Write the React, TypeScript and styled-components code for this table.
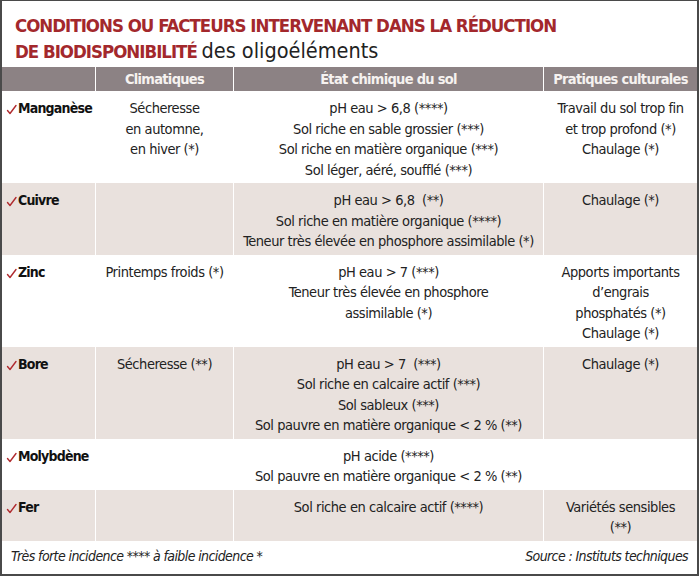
import React from "react";
import styled, { createGlobalStyle } from "styled-components";

const Global = createGlobalStyle`
  html, body { margin: 0; padding: 0; background: #fff; }
  body { font-family: "Liberation Sans Narrow", "DejaVu Sans Condensed", "Open Sans", sans-serif; font-stretch: condensed; }
`;

const Frame = styled.div`
  width: 699px;
  height: 576px;
  box-sizing: border-box;
  border: 2px solid #4a4a4a;
  border-top-width: 1px;
  background: #fff;
  display: flex;
  flex-direction: column;
  color: #222;
`;

const Title = styled.div`
  padding: 13px 0 0 13px;
  height: 66px;
  box-sizing: border-box;
  line-height: 24px;
`;

const Red = styled.span`
  color: #a3282c;
  font-weight: 700;
  font-size: 18.5px;
  letter-spacing: -1px;
  text-transform: uppercase;
`;

const Plain = styled.span`
  color: #222;
  font-weight: 400;
  font-size: 21.5px;
  letter-spacing: 0px;
`;

const Row = styled.div`
  display: grid;
  grid-template-columns: 93px 137px 309px 1fr;
  column-gap: 1px;
  background: #fff;
`;

const HeadCell = styled.div`
  background: #8c8284;
  color: #f6f2f0;
  font-weight: 700;
  font-size: 14.5px;
  letter-spacing: -0.7px;
  height: 24px;
  line-height: 24px;
  text-align: center;
`;

const Cell = styled.div<{ $shade: boolean }>`
  background: ${(p) => (p.$shade ? "#e9e1dd" : "#fff")};
  padding: 7px 2px 3px;
  font-size: 14.5px;
  letter-spacing: -0.45px;
  line-height: 20.5px;
  text-align: center;
  color: #222;
`;

const NameCell = styled(Cell)`
  text-align: left;
  padding-left: 4px;
  font-weight: 700;
  font-size: 14px;
  letter-spacing: -0.8px;
  color: #111;
  display: flex;
  align-items: flex-start;
  gap: 1px;
`;

const Check = styled.svg`
  width: 11px;
  height: 11px;
  margin-top: 6px;
  flex: none;
`;

const Line = styled.div`
  white-space: pre;
`;

const Footer = styled.div`
  flex: 1;
  display: flex;
  justify-content: space-between;
  align-items: center;
  padding: 0 9px 2px 9px;
  font-style: italic;
  font-size: 14px;
  letter-spacing: -0.6px;
  color: #222;
`;

type RowData = {
  name: string;
  clim: string[];
  etat: string[];
  prat: string[];
};

const rows: RowData[] = [
  {
    name: "Manganèse",
    clim: ["Sécheresse", "en automne,", "en hiver (*)"],
    etat: [
      "pH eau > 6,8 (****)",
      "Sol riche en sable grossier (***)",
      "Sol riche en matière organique (***)",
      "Sol léger, aéré, soufflé (***)",
    ],
    prat: ["Travail du sol trop fin", "et trop profond (*)", "Chaulage (*)"],
  },
  {
    name: "Cuivre",
    clim: [],
    etat: [
      "pH eau > 6,8  (**)",
      "Sol riche en matière organique (****)",
      "Teneur très élevée en phosphore assimilable (*)",
    ],
    prat: ["Chaulage (*)"],
  },
  {
    name: "Zinc",
    clim: ["Printemps froids (*)"],
    etat: ["pH eau > 7 (***)", "Teneur très élevée en phosphore", "assimilable (*)"],
    prat: ["Apports importants", "d’engrais", "phosphatés (*)", "Chaulage (*)"],
  },
  {
    name: "Bore",
    clim: ["Sécheresse (**)"],
    etat: [
      "pH eau > 7  (***)",
      "Sol riche en calcaire actif (***)",
      "Sol sableux (***)",
      "Sol pauvre en matière organique < 2 % (**)",
    ],
    prat: ["Chaulage (*)"],
  },
  {
    name: "Molybdène",
    clim: [],
    etat: ["pH acide (****)", "Sol pauvre en matière organique < 2 % (**)"],
    prat: [],
  },
  {
    name: "Fer",
    clim: [],
    etat: ["Sol riche en calcaire actif (****)"],
    prat: ["Variétés sensibles", "(**)"],
  },
];

const Lines = ({ items }: { items: string[] }) => (
  <>
    {items.map((t, i) => (
      <Line key={i}>{t}</Line>
    ))}
  </>
);

export default function App() {
  return (
    <>
      <Global />
      <Frame>
        <Title>
          <Red>Conditions ou facteurs intervenant dans la réduction</Red>
          <br />
          <Red>de biodisponibilité</Red> <Plain>des oligoéléments</Plain>
        </Title>
        <Row>
          <HeadCell />
          <HeadCell>Climatiques</HeadCell>
          <HeadCell>État chimique du sol</HeadCell>
          <HeadCell>Pratiques culturales</HeadCell>
        </Row>
        {rows.map((r, i) => {
          const shade = i % 2 === 1;
          return (
            <Row key={r.name}>
              <NameCell $shade={shade}>
                <Check viewBox="0 0 11 11">
                  <path d="M1.5 6.5 L4 9.5 L10 1.5" fill="none" stroke="#b02a2e" strokeWidth="1.4" strokeLinecap="round" strokeLinejoin="round" />
                </Check>
                <span>{r.name}</span>
              </NameCell>
              <Cell $shade={shade}>
                <Lines items={r.clim} />
              </Cell>
              <Cell $shade={shade}>
                <Lines items={r.etat} />
              </Cell>
              <Cell $shade={shade}>
                <Lines items={r.prat} />
              </Cell>
            </Row>
          );
        })}
        <Footer>
          <span>Très forte incidence **** à faible incidence *</span>
          <span>Source : Instituts techniques</span>
        </Footer>
      </Frame>
    </>
  );
}
